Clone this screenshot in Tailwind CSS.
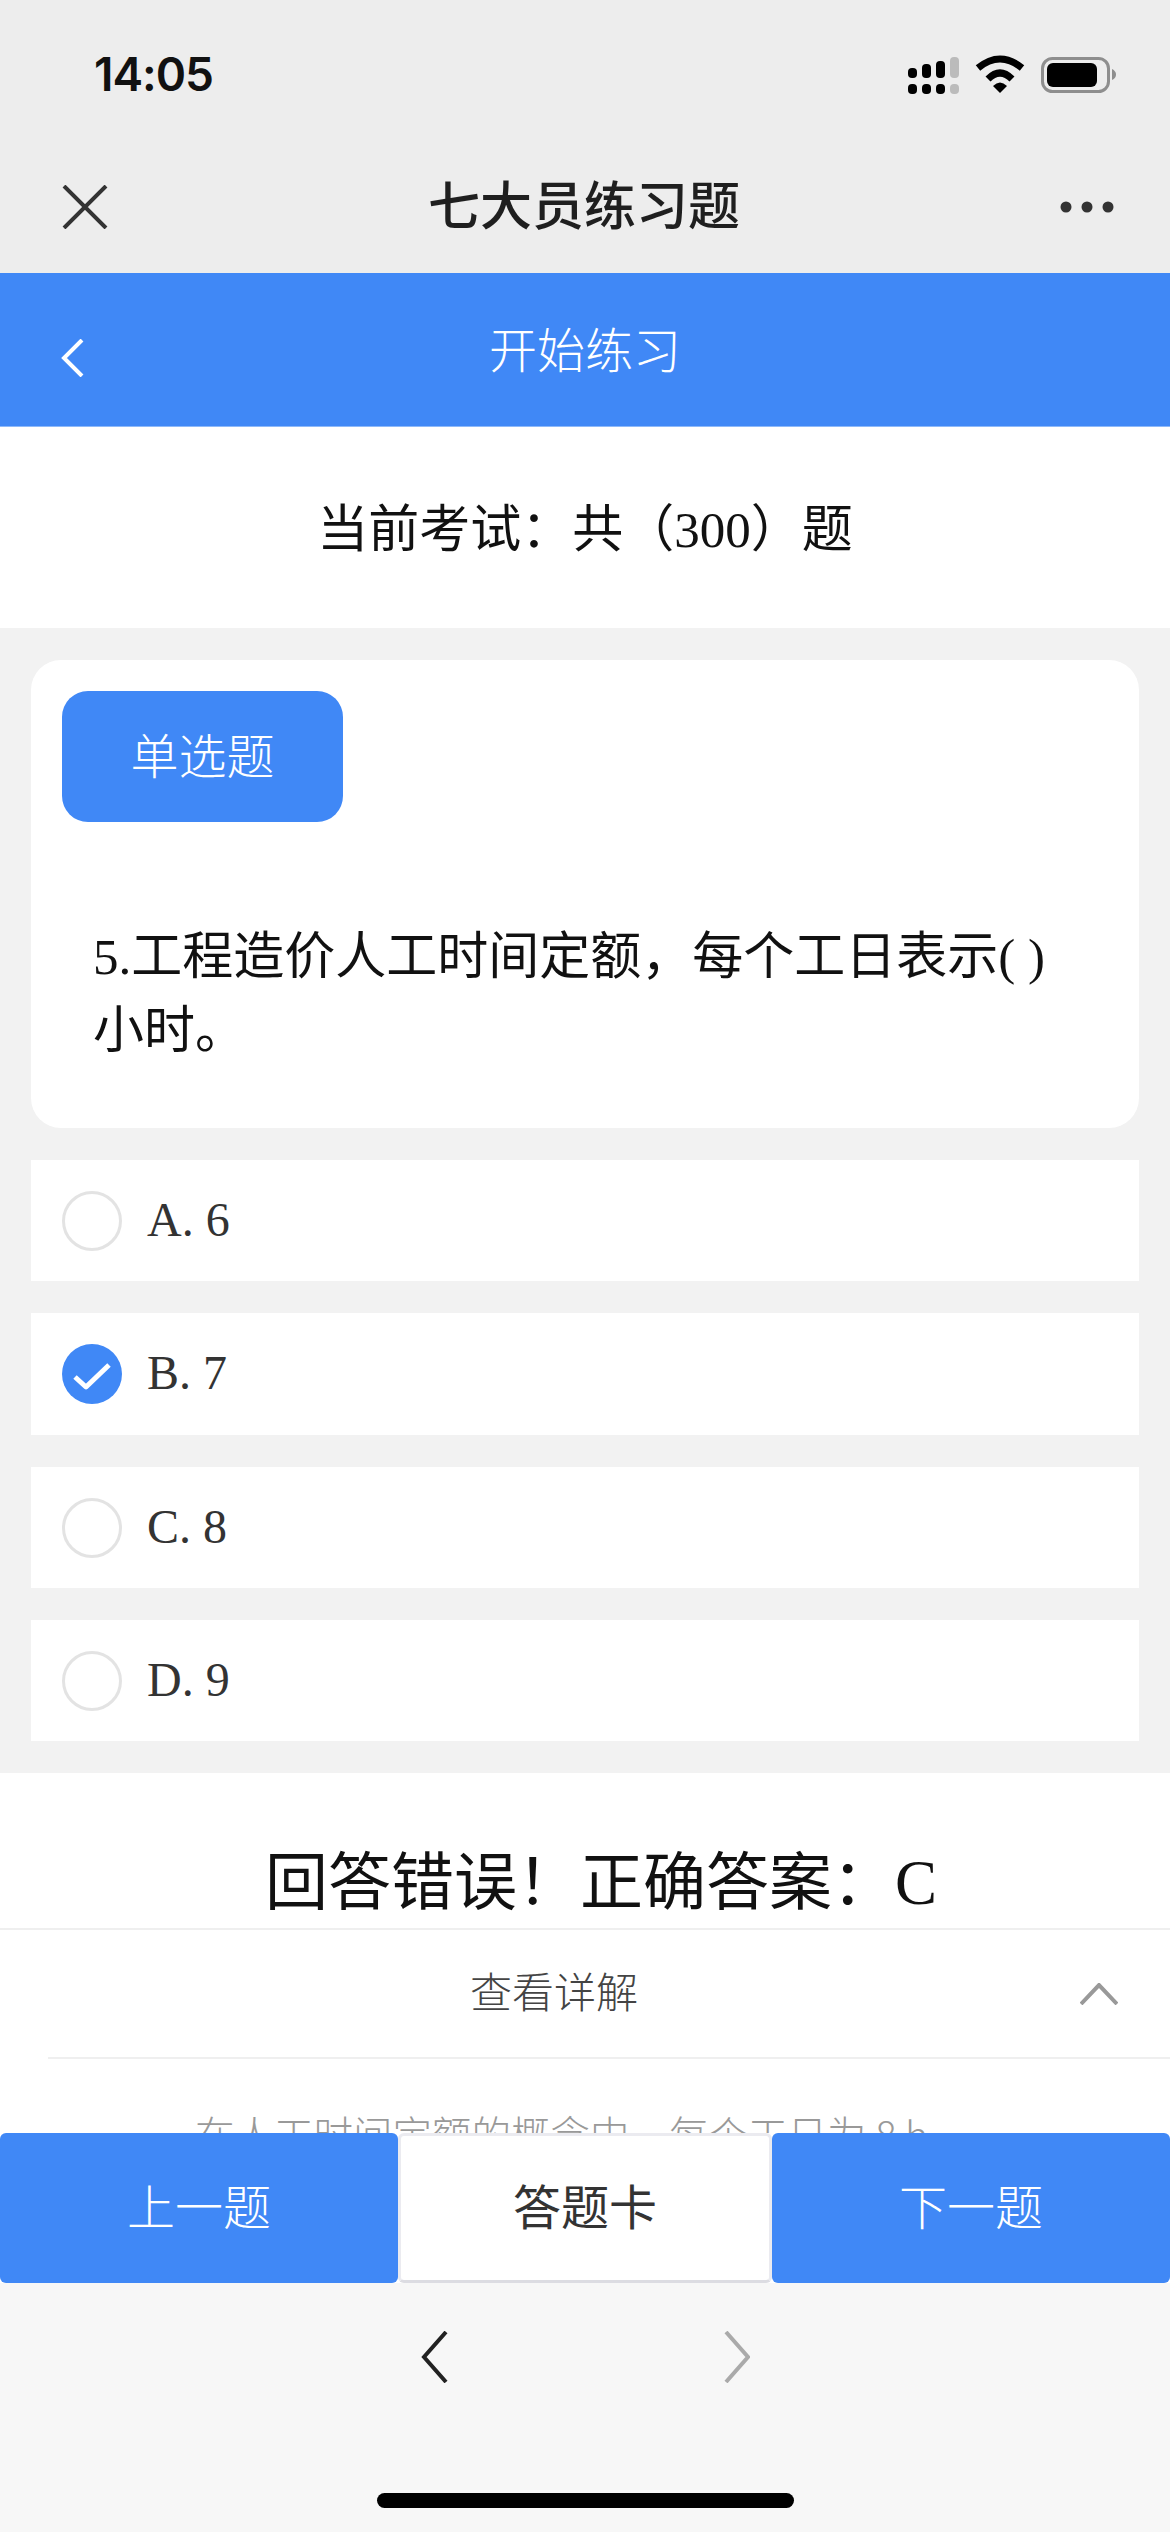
<!DOCTYPE html>
<html lang="zh-CN">
<head>
<meta charset="utf-8">
<script src="https://cdn.jsdelivr.net/npm/@tailwindcss/browser@4"></script>
</head>
<body class="m-0">
<div class="w-[1170px] h-[2532px] flex flex-col overflow-hidden bg-[#f2f2f2] font-['Liberation_Serif','Noto_Sans_CJK_SC',serif]">
  <!-- system header -->
  <header class="h-[273px] shrink-0 bg-[#ededed] flex flex-col font-['Inter','Noto_Sans_CJK_SC',sans-serif]">
    <div class="h-[148px] flex items-center justify-between pl-[94px] pr-[52px]">
      <span class="text-[46px] leading-none font-semibold text-[#111] tracking-[-1px]">14:05</span>
      <svg class="w-[212px] h-[46px]" viewBox="905 50 212 46">
        <g fill="#000">
          <rect x="907" y="67" width="9" height="10" rx="4"/><rect x="921" y="63" width="9" height="14" rx="4"/><rect x="935" y="60" width="9" height="17" rx="4"/>
          <rect x="907" y="83" width="9" height="10" rx="4"/><rect x="921" y="83" width="9" height="10" rx="4"/><rect x="935" y="83" width="9" height="10" rx="4"/>
        </g>
        <g fill="#bbb"><rect x="949" y="56" width="9" height="21" rx="4"/><rect x="949" y="83" width="9" height="10" rx="4"/></g>
        <g fill="none" stroke="#000" stroke-width="7">
          <path d="M977 67Q999 49 1021 67"/><path d="M987 78Q999 66 1011 78"/>
        </g>
        <path d="M992 85Q999 78 1006 85L999 92Z" fill="#000"/>
        <rect x="1041.500" y="57.500" width="66" height="33" rx="10" fill="none" stroke="#8e8e8e" stroke-width="3"/>
        <rect x="1046" y="62" width="50" height="24" rx="6" fill="#000"/>
        <path d="M1111 68Q1115 70 1115 73.500Q1115 77 1111 79Z" fill="#8e8e8e"/>
      </svg>
    </div>
    <div class="h-[125px] flex items-center justify-between pl-[62px] pr-[56px] pb-[8px]">
      <svg class="w-[46px] h-[44px]" viewBox="0 0 46 44" fill="none" stroke="#333" stroke-width="4"><path d="M2 1L44 43M44 1L2 43"/></svg>
      <span class="text-[52px] leading-none font-medium text-[#1f1f1f]">七大员练习题</span>
      <svg class="w-[54px] h-[12px]" viewBox="0 0 54 12" fill="#333"><circle cx="6" cy="6" r="5.500"/><circle cx="27" cy="6" r="5.500"/><circle cx="48" cy="6" r="5.500"/></svg>
    </div>
  </header>

  <!-- page title -->
  <div class="relative h-[154px] shrink-0 bg-[#4088f6] border-b border-[#8db9fa] flex items-center justify-center pb-[6px]">
    <svg class="absolute left-[60px] top-[66px] w-[24px] h-[38px]" viewBox="0 0 24 38" fill="none" stroke="#fff" stroke-width="4"><path d="M22 1L4 19L22 37"/></svg>
    <span class="text-[48px] leading-none text-white font-['Noto_Sans_CJK_SC',sans-serif] font-light">开始练习</span>
  </div>

  <!-- scrolling content -->
  <main class="h-[1706px] shrink-0 overflow-hidden">
    <div class="h-[201px] bg-white flex items-center justify-center pt-[6px] text-[51px] leading-none text-[#111]">当前考试：共（300）题</div>

    <div class="pt-[32px] pb-[32px] px-[31px] flex flex-col gap-[32px]">
      <section class="h-[468px] bg-white rounded-[30px] pt-[31px] px-[31px]">
        <div class="w-[281px] h-[131px] rounded-[26px] bg-[#4088f6] flex items-center justify-center pb-[8px] text-[48px] leading-none text-white font-['Noto_Sans_CJK_SC',sans-serif] font-light">单选题</div>
        <p class="mt-[98px] pl-[31px] pr-[60px] text-[51px] leading-[74px] text-[#111]">5.工程造价人工时间定额，每个工日表示( )小时。</p>
      </section>

      <div class="h-[121px] bg-white flex items-center pl-[31px] gap-[25px] text-[48px] leading-none text-[#333]">
        <span class="w-[60px] h-[60px] rounded-full border-[3px] border-[#e3e3e3]"></span><span class="pb-[2px]">A. 6</span>
      </div>
      <div class="h-[122px] bg-white flex items-center pl-[31px] gap-[25px] text-[48px] leading-none text-[#333]">
        <svg class="w-[60px] h-[60px]" viewBox="0 0 60 60"><circle cx="30" cy="30" r="30" fill="#4088f6"/><path d="M13 33L24 43L47 21" fill="none" stroke="#fff" stroke-width="5" stroke-linejoin="round"/></svg><span class="pb-[2px]">B. 7</span>
      </div>
      <div class="h-[121px] bg-white flex items-center pl-[31px] gap-[25px] text-[48px] leading-none text-[#333]">
        <span class="w-[60px] h-[60px] rounded-full border-[3px] border-[#e3e3e3]"></span><span class="pb-[2px]">C. 8</span>
      </div>
      <div class="h-[121px] bg-white flex items-center pl-[31px] gap-[25px] text-[48px] leading-none text-[#333]">
        <span class="w-[60px] h-[60px] rounded-full border-[3px] border-[#e3e3e3]"></span><span class="pb-[2px]">D. 9</span>
      </div>
    </div>

    <section class="bg-white h-[360px]">
      <div class="h-[157px] border-b-2 border-[#efefef] flex items-center justify-center pt-[66px] pl-[32px] text-[63px] leading-none text-[#111]"><span>回答错误！正确答案：C</span></div>
      <div class="ml-[48px] h-[129px] border-b-2 border-[#efefef] flex items-center justify-between pr-[52px] pl-[422px] pb-[8px] font-['Noto_Sans_CJK_SC',sans-serif]">
        <span class="text-[42px] leading-none text-[#444] font-light">查看详解</span>
        <svg class="w-[38px] h-[22px] mt-[8px]" viewBox="0 0 38 22" fill="none" stroke="#999" stroke-width="4"><path d="M1 21L19 2L37 21"/></svg>
      </div>
      <p class="pt-[54px] pl-[195px] text-left text-[39.500px] leading-none text-[#999] font-['Noto_Sans_CJK_SC',sans-serif] font-light">在人工时间定额的概念中，每个工日为 8 h</p>
    </section>
  </main>

  <!-- bottom buttons -->
  <nav class="h-[150px] shrink-0 flex bg-white text-[48px] leading-none font-['Noto_Sans_CJK_SC',sans-serif] font-light">
    <button class="w-[398px] rounded-[6px] bg-[#4088f6] text-white pb-[8px]">上一题</button>
    <button class="flex-1 rounded-[6px] bg-white border-[3px] border-[#ebebf0] border-b-[#dcdce2] text-[#333] font-normal pb-[8px]">答题卡</button>
    <button class="w-[398px] rounded-[6px] bg-[#4088f6] text-white pb-[8px]">下一题</button>
  </nav>

  <!-- browser toolbar -->
  <footer class="flex-1 bg-[#f7f7f7] flex flex-col items-center">
    <div class="mt-[48px] w-[330px] flex justify-between">
      <svg class="w-[28px] h-[52px]" viewBox="0 0 28 52" fill="none" stroke="#222" stroke-width="4"><path d="M26 1L4 26L26 51"/></svg>
      <svg class="w-[28px] h-[52px]" viewBox="0 0 28 52" fill="none" stroke="#aaa" stroke-width="4"><path d="M4 1L26 26L4 51"/></svg>
    </div>
    <div class="mt-[110px] w-[417px] h-[15px] rounded-full bg-black"></div>
  </footer>
</div>
</body>
</html>
